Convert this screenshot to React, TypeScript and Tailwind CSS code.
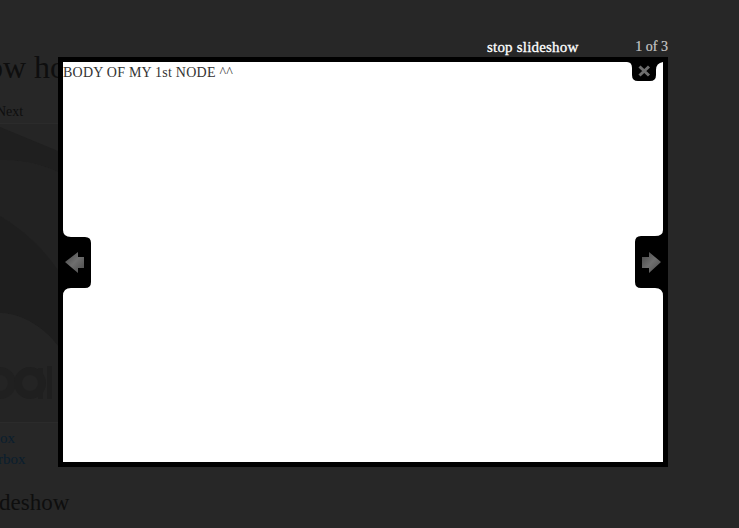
import React from "react";

const serif = "font-['Liberation_Serif','DejaVu_Serif',serif]";

function Backdrop() {
  return (
    <div className={`flex h-[528px] w-[739px] flex-col bg-[#272727] text-[#0e0e0e] ${serif}`}>
      <div className="ml-[-13px] mt-[49px] h-[36px] whitespace-nowrap text-[32px] leading-[36px]">
        ow ho
      </div>
      <div className="ml-[-4px] mt-[17px] h-[20px] whitespace-nowrap text-[14px] leading-[20px]">Next</div>
      <div className="mt-[1px] h-[300px] w-[58px] border-y border-[#2b2b2b] bg-[#252525]">
        <svg viewBox="0 0 58 298" className="h-full w-full">
          <path d="M0 0H58V298H0Z" fill="#252525" />
          <path d="M0 3L58 27V48C36 38 18 36 0 36Z" fill="#1f1f1f" />
          <path d="M0 36C18 36 36 38 58 48V146C40 120 20 104 0 92Z" fill="#222222" />
          <path d="M0 92C20 104 40 120 58 146V222C44 204 24 190 0 189Z" fill="#1e1e1e" />
          <path d="M0 189C24 190 44 204 58 222V298H0Z" fill="#242424" />
          <circle cx="0" cy="259" r="12" fill="none" stroke="#202020" strokeWidth="8" />
          <circle cx="30" cy="259" r="12" fill="none" stroke="#1f1f1f" strokeWidth="8" />
          <path d="M38 244H43V275H38Z" fill="#1f1f1f" />
          <path d="M47 242H52V275H47Z" fill="#1f1f1f" />
        </svg>
      </div>
      <div className="mt-[5px] whitespace-nowrap text-[15px] leading-[21px] text-[#0a1e2e]">
        <div className="h-[21px]">ox</div>
        <div className="ml-[-2px] h-[21px]">rbox</div>
      </div>
      <div className="ml-[-1px] mt-[20px] text-[23px] leading-[26px]">deshow</div>
    </div>
  );
}

function Modal() {
  return (
    <div className={`absolute left-[58px] top-[57px] h-[410px] w-[610px] ${serif}`}>
      <div className="absolute left-[429px] top-[-19px] whitespace-nowrap text-[15px] leading-[18px] tracking-[0.2px] text-white [-webkit-text-stroke:0.3px_white]">
        stop slideshow
      </div>
      <div className="absolute right-0 top-[-19px] whitespace-nowrap text-[14px] leading-[18px] text-[#c8c8c8] [-webkit-text-stroke:0.2px_#c8c8c8]">
        1 of 3
      </div>
      <div className="h-full w-full border-[5px] border-black bg-white pt-px text-[14px] leading-[20px] tracking-[0.23px] text-[#333]">
        BODY OF MY 1st NODE ^^
      </div>
      <svg className="absolute left-0 top-0" width="610" height="410" viewBox="58 57 610 410">
        <defs>
          <linearGradient id="arrowL" x1="0" y1="0" x2="1" y2="1">
            <stop offset="0" stopColor="#444" />
            <stop offset="0.5" stopColor="#6f6f6f" />
            <stop offset="1" stopColor="#4a4a4a" />
          </linearGradient>
        </defs>
        <path d="M627 62Q632 62 632 68V75Q632 81 638 81H650Q656 81 656 75V70Q656 63 663 62Z" fill="#000" />
        <path d="M639.5 66.5L649 75.5M649 66.5L639.5 75.5" stroke="#6e6e6e" strokeWidth="3" fill="none" />
        <path d="M63 230Q63 237 71 237H85Q91 237 91 243V282Q91 288 85 288H71Q63 288 63 296Z" fill="#000" />
        <path d="M65 262L78 252V257H84V268H78V273Z" fill="url(#arrowL)" />
        <path d="M663 230Q663 236 655 236H641Q635 236 635 242V282Q635 288 641 288H655Q663 288 663 296Z" fill="#000" />
        <path d="M661 262L649 252V257H642V268H649V273Z" fill="url(#arrowL)" />
      </svg>
    </div>
  );
}

export default function App() {
  return (
    <div className="relative h-[528px] w-[739px] overflow-hidden">
      <Backdrop />
      <Modal />
    </div>
  );
}
